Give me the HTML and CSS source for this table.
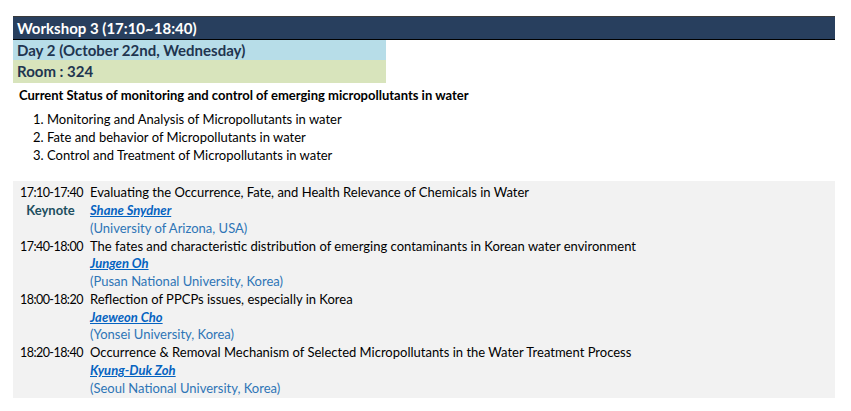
FILE: index.html
```html
<!DOCTYPE html>
<html>
<head>
<meta charset="utf-8">
<link rel="stylesheet" href="styles.css">
</head>
<body>
<div class="page">
  <div class="hdr">Workshop 3 (17:10~18:40)</div>
  <div class="day">Day 2 (October 22nd, Wednesday)</div>
  <div class="room">Room : 324</div>
  <div class="topic">Current Status of monitoring and control of emerging micropollutants in water</div>
  <ol class="themes">
    <li>Monitoring and Analysis of Micropollutants in water</li>
    <li>Fate and behavior of Micropollutants in water</li>
    <li>Control and Treatment of Micropollutants in water</li>
  </ol>
  <div class="sched">
    <div class="time">17:10-17:40</div>
    <div class="title">Evaluating the Occurrence, Fate, and Health Relevance of Chemicals in Water</div>
    <div class="tag">Keynote</div>
    <div class="name"><a>Shane Snydner</a></div>
    <div></div>
    <div class="aff">(University of Arizona, USA)</div>

    <div class="time">17:40-18:00</div>
    <div class="title">The fates and characteristic distribution of emerging contaminants in Korean water environment</div>
    <div></div>
    <div class="name"><a>Jungen Oh</a></div>
    <div></div>
    <div class="aff">(Pusan National University, Korea)</div>

    <div class="time">18:00-18:20</div>
    <div class="title">Reflection of PPCPs issues, especially in Korea</div>
    <div></div>
    <div class="name"><a>Jaeweon Cho</a></div>
    <div></div>
    <div class="aff">(Yonsei University, Korea)</div>

    <div class="time">18:20-18:40</div>
    <div class="title">Occurrence &amp; Removal Mechanism of Selected Micropollutants in the Water Treatment Process</div>
    <div></div>
    <div class="name"><a>Kyung-Duk Zoh</a></div>
    <div></div>
    <div class="aff">(Seoul National University, Korea)</div>
  </div>
</div>
</body>
</html>
```
FILE: styles.css
```css
html, body {
  margin: 0;
  padding: 0;
  background: #ffffff;
}
body {
  font-family: Lato, "Open Sans", sans-serif;
  color: #000000;
}
.page {
  padding: 16px 16px 0 13px;
  width: 822px;
}
.hdr {
  background: #283f5e;
  color: #ffffff;
  font-weight: bold;
  font-size: 15px;
  height: 22px;
  line-height: 22px;
  border-top: 1px solid #3a3a3a;
  border-bottom: 1px solid #000000;
  padding-left: 4px;
}
.day {
  width: 369px;
  background: #b7dde8;
  color: #1f3550;
  font-weight: bold;
  font-size: 15px;
  height: 20px;
  line-height: 20px;
  padding-left: 4px;
}
.room {
  width: 369px;
  background: #d8e4bc;
  color: #1f3550;
  font-weight: bold;
  font-size: 15px;
  height: 23px;
  line-height: 22px;
  padding-left: 4px;
}
.topic {
  font-weight: bold;
  font-size: 13px;
  line-height: 18px;
  margin-top: 3px;
  padding-left: 6px;
}
.themes {
  margin: 7px 0 0 0;
  padding-left: 34px;
  font-size: 13px;
  line-height: 17.8px;
}
.themes li {
  padding-left: 0;
}
.sched {
  margin-top: 17px;
  background: #f2f2f2;
  display: grid;
  grid-template-columns: 77px 1fr;
  font-size: 13px;
  line-height: 17.75px;
  padding: 3px 0 1px 0;
}
.time {
  white-space: nowrap;
  padding-left: 7px;
  font-size: 12.5px;
  letter-spacing: -0.55px;
}
.title {
  white-space: nowrap;
}
.tag {
  color: #1d4f60;
  font-weight: bold;
  text-align: center;
  padding-right: 2px;
}
.name a {
  color: #0563c1;
  font-weight: bold;
  font-style: italic;
  text-decoration: underline;
}
.aff {
  color: #2e75b6;
}
```
